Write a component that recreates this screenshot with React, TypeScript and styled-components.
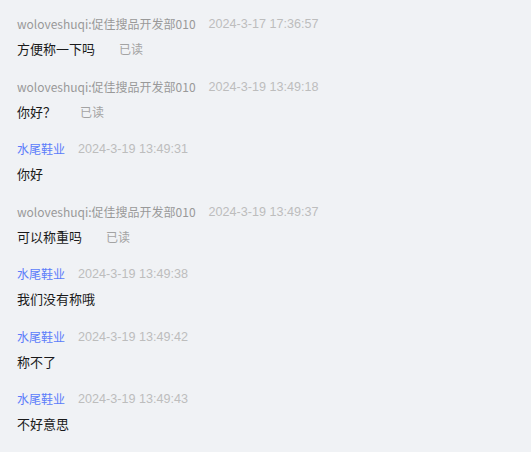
import React from "react";
import styled, { createGlobalStyle } from "styled-components";

const GlobalStyle = createGlobalStyle`
  html, body {
    margin: 0;
    padding: 0;
    background: #f0f2f5;
  }
  body {
    font-family: "Noto Sans CJK SC", "Noto Sans", sans-serif;
  }
`;

const ChatList = styled.div`
  display: flex;
  flex-direction: column;
  padding: 15px 17px 0;
  width: 531px;
  height: 452px;
  box-sizing: border-box;
  overflow: hidden;
  background: #f0f2f5;
`;

const MessageItem = styled.div`
  display: flex;
  flex-direction: column;
  padding-bottom: 18.5px;
`;

const MessageHeader = styled.div`
  display: flex;
  align-items: center;
  gap: 13px;
  height: 18px;
  font-size: 12px;
  line-height: 18px;
  white-space: nowrap;
`;

const SenderName = styled.span<{ $self: boolean }>`
  color: ${(p) => (p.$self ? "#999999" : "#5b7cfa")};
`;

const SentTime = styled.span`
  font-family: "Liberation Sans", Arial, sans-serif;
  font-size: 12.6px;
  color: #bdbdbd;
`;

const MessageBody = styled.div`
  display: flex;
  align-items: center;
  margin-top: 6px;
  height: 20px;
  font-size: 13px;
  line-height: 20px;
  color: #1a1a1a;
`;

const ReadMark = styled.span`
  margin-left: 24px;
  font-size: 12px;
  color: #a3a3a3;
`;

type Message = {
  sender: string;
  self: boolean;
  time: string;
  text: string;
  read?: boolean;
};

const messages: Message[] = [
  { sender: "woloveshuqi:促佳搜品开发部010", self: true, time: "2024-3-17 17:36:57", text: "方便称一下吗", read: true },
  { sender: "woloveshuqi:促佳搜品开发部010", self: true, time: "2024-3-19 13:49:18", text: "你好？", read: true },
  { sender: "水尾鞋业", self: false, time: "2024-3-19 13:49:31", text: "你好" },
  { sender: "woloveshuqi:促佳搜品开发部010", self: true, time: "2024-3-19 13:49:37", text: "可以称重吗", read: true },
  { sender: "水尾鞋业", self: false, time: "2024-3-19 13:49:38", text: "我们没有称哦" },
  { sender: "水尾鞋业", self: false, time: "2024-3-19 13:49:42", text: "称不了" },
  { sender: "水尾鞋业", self: false, time: "2024-3-19 13:49:43", text: "不好意思" },
];

export default function App() {
  return (
    <>
      <GlobalStyle />
      <ChatList>
        {messages.map((m, i) => (
          <MessageItem key={i}>
            <MessageHeader>
              <SenderName $self={m.self}>{m.sender}</SenderName>
              <SentTime>{m.time}</SentTime>
            </MessageHeader>
            <MessageBody>
              {m.text}
              {m.read && <ReadMark>已读</ReadMark>}
            </MessageBody>
          </MessageItem>
        ))}
      </ChatList>
    </>
  );
}
